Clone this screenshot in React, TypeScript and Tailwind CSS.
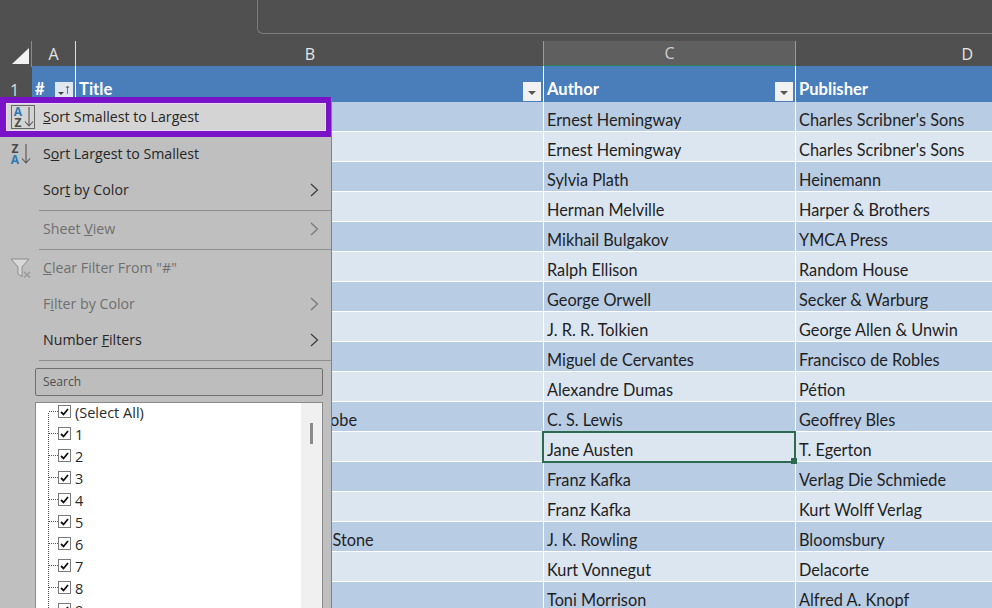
// App.tsx
// Excel table with the column filter menu open

type Book = {
  title: string;
  author: string;
  publisher: string;
};

const books: Book[] = [
  { title: "", author: "Ernest Hemingway", publisher: "Charles Scribner's Sons" },
  { title: "", author: "Ernest Hemingway", publisher: "Charles Scribner's Sons" },
  { title: "", author: "Sylvia Plath", publisher: "Heinemann" },
  { title: "", author: "Herman Melville", publisher: "Harper & Brothers" },
  { title: "", author: "Mikhail Bulgakov", publisher: "YMCA Press" },
  { title: "", author: "Ralph Ellison", publisher: "Random House" },
  { title: "", author: "George Orwell", publisher: "Secker & Warburg" },
  { title: "", author: "J. R. R. Tolkien", publisher: "George Allen & Unwin" },
  { title: "", author: "Miguel de Cervantes", publisher: "Francisco de Robles" },
  { title: "", author: "Alexandre Dumas", publisher: "Pétion" },
  { title: "The Lion, the Witch and the Wardrobe", author: "C. S. Lewis", publisher: "Geoffrey Bles" },
  { title: "", author: "Jane Austen", publisher: "T. Egerton" },
  { title: "", author: "Franz Kafka", publisher: "Verlag Die Schmiede" },
  { title: "", author: "Franz Kafka", publisher: "Kurt Wolff Verlag" },
  { title: "Harry Potter and the Philosopher's Stone", author: "J. K. Rowling", publisher: "Bloomsbury" },
  { title: "", author: "Kurt Vonnegut", publisher: "Delacorte" },
  { title: "", author: "Toni Morrison", publisher: "Alfred A. Knopf" },
];

const filterValues = ["(Select All)", "1", "2", "3", "4", "5", "6", "7", "8", "9"];

const cols = "grid grid-cols-[32px_44px_468px_252px_1fr]";

function Chevron({ muted }: { muted?: boolean }) {
  return (
    <svg width="9" height="14" viewBox="0 0 9 14" className="ml-auto mr-[12px]">
      <path d="M1 1l6.5 6L1 13" fill="none" stroke={muted ? "#777777" : "#3a3a3a"} strokeWidth="1.2" />
    </svg>
  );
}

function FilterButton() {
  return (
    <div className="absolute bottom-[1px] right-[2px] flex h-[19px] w-[18px] items-center justify-center bg-[#f1f1f1]">
      <div className="mt-[2px] h-0 w-0 border-x-[4px] border-t-[4px] border-x-transparent border-t-[#555555]" />
    </div>
  );
}

function SortIcon({ first, second }: { first: string; second: string }) {
  const letter = (l: string) => (l === "A" ? "text-[#2b79b5]" : "text-[#4a4a4a]");
  return (
    <div className="flex h-[22px] w-[22px] items-center">
      <div className="flex w-[12px] flex-col items-center text-[12px] font-bold leading-[11px]">
        <span className={letter(first)}>{first}</span>
        <span className={letter(second)}>{second}</span>
      </div>
      <svg width="10" height="22" viewBox="0 0 10 22">
        <path d="M5 1v19M1 15.5l4 4.5 4-4.5" fill="none" stroke="#555555" strokeWidth="1.1" />
      </svg>
    </div>
  );
}

function MenuItem({
  before,
  hotkey,
  after,
  muted,
  submenu,
  icon,
}: {
  before: string;
  hotkey: string;
  after: string;
  muted?: boolean;
  submenu?: boolean;
  icon?: React.ReactNode;
}) {
  return (
    <div className={`flex h-[36px] shrink-0 items-center text-[14.2px] ${muted ? "text-[#6f6f6f]" : "text-[#262626]"}`}>
      <div className="flex w-[43px] shrink-0 justify-center pl-[3px] pr-[6px]">{icon}</div>
      <span>
        {before}
        <span className="underline">{hotkey}</span>
        {after}
      </span>
      {submenu && <Chevron muted={muted} />}
    </div>
  );
}

function Separator() {
  return <div className="ml-[39px] h-px shrink-0 bg-[#8e8e8e]" />;
}

function FilterMenu() {
  return (
    <div className="absolute left-0 top-[97px] flex h-[511px] w-[332px] flex-col overflow-hidden border-r border-[#7f8388] bg-[#bfbfbf] font-['Open_Sans',sans-serif]">
      <div className="z-10 -mb-px -mr-px h-[40px] shrink-0 border-[6px] border-[#7a12c8]">
        <div className="flex h-full items-center border border-[#ecd9f7] bg-[#d4d4d4] text-[14.2px] text-[#262626]">
          <div className="ml-[4px] flex h-[24px] w-[24px] items-center justify-center border border-[#666666]">
            <SortIcon first="A" second="Z" />
          </div>
          <span className="ml-[8px]">
            <span className="underline">S</span>ort Smallest to Largest
          </span>
        </div>
      </div>
      <MenuItem before="S" hotkey="o" after="rt Largest to Smallest" icon={<SortIcon first="Z" second="A" />} />
      <MenuItem before="Sor" hotkey="t" after=" by Color" submenu />
      <div className="h-[2px] shrink-0" />
      <Separator />
      <MenuItem before="Sheet " hotkey="V" after="iew" muted submenu />
      <div className="h-[2px] shrink-0" />
      <Separator />
      <MenuItem
        before=""
        hotkey="C"
        after={'lear Filter From "#"'}
        muted
        icon={
          <svg width="21" height="20" viewBox="0 0 21 20">
            <path d="M1 1h18l-7 8v9.5l-4-2.5V9z" fill="#d8d8d8" stroke="#8c8c8c" strokeWidth="1" />
            <path d="M14 14l6 5.5M20 14l-6 5.5" stroke="#9a9a9a" strokeWidth="1.6" />
          </svg>
        }
      />
      <MenuItem before="F" hotkey="i" after="lter by Color" muted submenu />
      <MenuItem before="Number " hotkey="F" after="ilters" submenu />
      <div className="h-[2px] shrink-0" />
      <Separator />
      <div className="ml-[35px] mr-[8px] mt-[7px] flex h-[28px] shrink-0 items-center rounded-[2px] border border-[#6f6f6f] bg-[#bdbdbd] pl-[7px] text-[12px] text-[#4f4f4f]">
        Search
      </div>
      <div className="relative ml-[35px] mr-[8px] mt-[6px] flex-1 overflow-hidden border-x border-t border-[#8a8a8a] bg-white">
        <div className="absolute bottom-0 left-[12px] top-[10px] border-l border-dotted border-[#555555]" />
        <div className="-mt-px flex flex-col">
          {filterValues.map((value) => (
            <div key={value} className="flex h-[22px] items-center text-[14.5px] text-[#2a2a2a]">
              <div className="mb-[3px] ml-[13px] w-[9px] border-t border-dotted border-[#555555]" />
              <div className="mb-[3px] flex h-[13px] w-[13px] items-center justify-center border border-[#7a7a7a] bg-white">
                <svg width="9" height="8" viewBox="0 0 9 8">
                  <path d="M1 4l2.5 2.5L8 1" fill="none" stroke="#111111" strokeWidth="1.8" />
                </svg>
              </div>
              <span className="ml-[4px]">{value}</span>
            </div>
          ))}
        </div>
        <div className="absolute bottom-0 right-0 top-0 flex w-[21px] justify-center bg-[#f0f0f0]">
          <div className="mt-[20px] h-[21px] w-[3px] bg-[#8a8a8a]" />
        </div>
      </div>
    </div>
  );
}

export default function App() {
  return (
    <div className="relative h-[608px] w-[992px] overflow-hidden bg-[#505050] font-['Lato',sans-serif] text-[16.3px]">
      {/* 数式バー */}
      <div className="h-[34px] pl-[257px]">
        <div className="h-full rounded-bl-[6px] border-b border-l border-[#7c7c7c]" />
      </div>
      <div className="h-[7px]" />

      {/* 列見出し */}
      <div className={`${cols} h-[25px] font-['Open_Sans',sans-serif] text-[16px] text-[#e6e6e6]`}>
        <div className="flex items-end justify-end border-r border-[#8a8a8a] pb-[3px] pr-[2px]">
          <div className="h-0 w-0 border-b-[16px] border-l-[17px] border-b-[#f2f2f2] border-l-transparent" />
        </div>
        <div className="flex items-center justify-center border-r border-[#dddddd]">A</div>
        <div className="flex items-center justify-center">B</div>
        <div className="-ml-px flex items-center justify-center border-x border-[#9a9a9a] border-b-2 border-b-[#2e7d5b] bg-[#5f5f5f] text-[#cfcfcf]">
          C
        </div>
        <div className="flex items-center justify-end pr-[19px]">D</div>
      </div>

      {/* ヘッダー行 */}
      <div className={`${cols} h-[36px] border-b-[2px] border-white text-[16.6px] font-bold text-white`}>
        <div className="pl-[10px] pt-[12px] font-['Open_Sans',sans-serif] text-[16px] font-normal text-[#dddddd]">1</div>
        <div className="relative flex items-end border-r border-white bg-[#4a7ebb] pl-[3px]">
          #
          <div className="absolute bottom-[1px] right-[2px] flex h-[19px] w-[18px] items-center justify-center bg-[#dfe6f0]">
            <div className="mt-[4px] h-0 w-0 border-x-[3px] border-t-[3px] border-x-transparent border-t-[#444444]" />
            <svg width="5" height="10" viewBox="0 0 5 10" className="mb-[3px] ml-[1px]">
              <path d="M2.5 9V1M1 3l1.5-2L4 3" fill="none" stroke="#555555" strokeWidth="0.8" />
            </svg>
          </div>
        </div>
        <div className="relative flex items-end border-r border-white bg-[#4a7ebb] pl-[3px]">
          Title
          <FilterButton />
        </div>
        <div className="relative flex items-end border-r border-white bg-[#4a7ebb] pl-[3px]">
          Author
          <FilterButton />
        </div>
        <div className="flex items-end bg-[#4a7ebb] pl-[3px]">Publisher</div>
      </div>

      {/* データ行 */}
      {books.map((book, index) => {
        const rowColor = index % 2 === 0 ? "bg-[#b8cce4]" : "bg-[#dce6f1]";
        return (
          <div key={index} className={`${cols} h-[30px] border-b border-white leading-[22px] text-[#1f1f1f]`}>
            <div />
            <div className={`border-r border-white ${rowColor}`} />
            <div className={`flex items-end whitespace-nowrap border-r border-white pl-[7px] ${rowColor}`}>
              {book.title}
            </div>
            <div className={`relative flex items-end border-r border-white pl-[3px] ${rowColor}`}>
              {book.author}
              {book.author === "Jane Austen" && (
                <>
                  <div className="absolute -bottom-[2px] -left-[2px] -right-[1px] -top-px z-10 border-2 border-[#2c6b4f]" />
                  <div className="absolute -bottom-[3px] -right-[2px] z-10 h-[6px] w-[6px] bg-[#2c6b4f]" />
                </>
              )}
            </div>
            <div className={`flex items-end pl-[3px] ${rowColor}`}>{book.publisher}</div>
          </div>
        );
      })}

      <FilterMenu />
    </div>
  );
}
